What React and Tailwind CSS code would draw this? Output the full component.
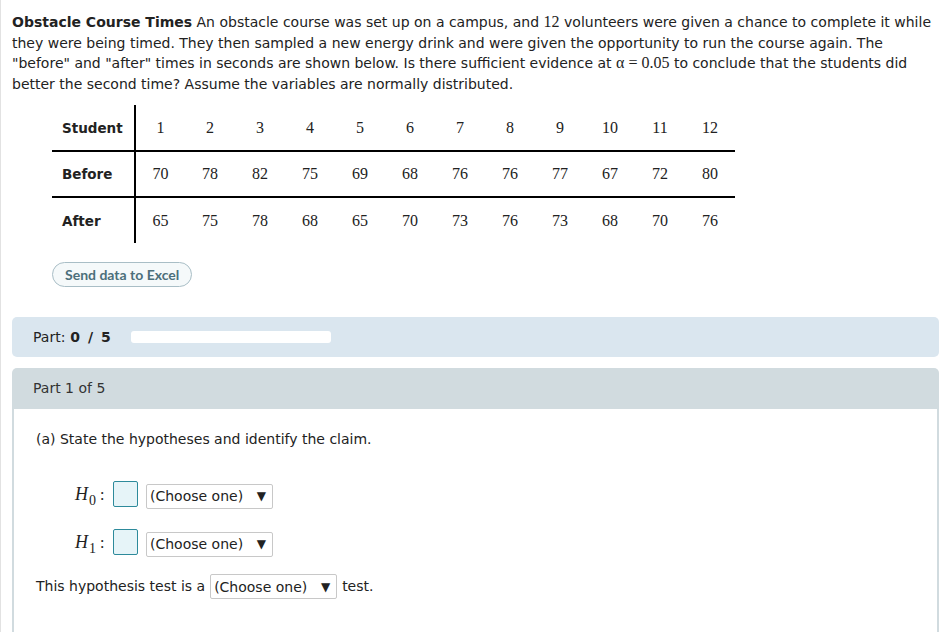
import React from "react";

const sans = { fontFamily: '"DejaVu Sans", Verdana, sans-serif' };
const serif = { fontFamily: '"Liberation Serif", "Times New Roman", serif' };

const students = [1, 2, 3, 4, 5, 6, 7, 8, 9, 10, 11, 12];
const before = [70, 78, 82, 75, 69, 68, 76, 76, 77, 67, 72, 80];
const after = [65, 75, 78, 68, 65, 70, 73, 76, 73, 68, 70, 76];

function Select() {
  return (
    <span className="inline-flex items-center justify-between w-[127px] h-[25px] px-[3px] border border-[#c8c8c8] rounded-[2px] bg-white text-[14px] text-[#222] leading-none">
      <span>(Choose one)</span>
      <span className="mr-[3px] text-[12px]">▼</span>
    </span>
  );
}

function Row({ label, values, border }) {
  return (
    <tr className={border ? "border-b-2 border-black" : ""}>
      <td className="w-[83px] h-[46px] pl-[10px] border-r-2 border-black text-[13.5px] font-bold text-[#222]" style={sans}>
        {label}
      </td>
      {values.map((v, i) => (
        <td key={i} className="w-[50px] text-center text-[16px] text-[#222]" style={serif}>
          {v}
        </td>
      ))}
    </tr>
  );
}

function Hyp({ sub }) {
  return (
    <div className="flex items-center h-[26px]">
      <span className="w-[38px] text-[#222] flex items-baseline" style={serif}>
        <span className="italic text-[18px]">H</span>
        <span className="text-[14px] relative top-[5px] ml-[1px]">{sub}</span>
        <span className="text-[16px] ml-[4px]">:</span>
      </span>
      <span className="w-[25px] h-[26px] border-[1.5px] border-[#2d8a9b] rounded-[2px] bg-[#e6f4f8]" />
      <span className="ml-[8px] mt-[4px]">
        <Select />
      </span>
    </div>
  );
}

export default function App() {
  return (
    <div className="h-[632px] w-[945px] bg-white border-l border-[#e2e2e2] overflow-hidden" style={sans}>
      <p className="pl-[11px] pr-[8px] pt-[12px] text-[14px] leading-[20.6px] text-[#222]">
        <b>Obstacle Course Times</b> An obstacle course was set up on a campus, and{" "}
        <span className="text-[16px]" style={serif}>12</span> volunteers were given a chance to complete it while they were being timed. They then sampled a new energy drink and were given the opportunity to run the course again. The "before" and "after" times in seconds are shown below. Is there sufficient evidence at{" "}
        <span className="text-[16px]" style={serif}>α = 0.05</span> to conclude that the students did better the second time? Assume the variables are normally distributed.
      </p>

      <table className="ml-[51px] mt-[11px] border-collapse">
        <tbody>
          <Row label="Student" values={students} border />
          <Row label="Before" values={before} border />
          <Row label="After" values={after} />
        </tbody>
      </table>

      <div className="ml-[51px] mt-[19px]">
        <button
          className="h-[25px] px-[12px] rounded-full border border-[#a9bec6] bg-[#f5f9fa] text-[14px] font-bold text-[#4c6f7b]"
          style={{ fontFamily: 'Lato, "Open Sans", sans-serif' }}
        >
          Send data to Excel
        </button>
      </div>

      <div className="ml-[11px] mr-[6px] mt-[30px] h-[40px] rounded-[5px] bg-[#dae6ef] flex items-center pl-[21px] text-[14px] text-[#222]">
        <span>Part:</span>
        <b className="ml-[5px] tracking-[1.5px]">0 / 5</b>
        <span className="ml-[19px] w-[200px] h-[12px] rounded-[3px] bg-white" />
      </div>

      <div className="ml-[11px] mr-[6px] mt-[11px]">
        <div className="h-[41px] rounded-t-[5px] bg-[#d1dbdf] flex items-center pl-[21px] text-[14px] text-[#333]">
          Part 1 of 5
        </div>
        <div className="h-[223px] border-x-2 border-[#d1dbdf] bg-white pl-[22px] pt-[20px] text-[14px] text-[#222]">
          <div className="leading-[20px]">(a) State the hypotheses and identify the claim.</div>
          <div className="ml-[39px] mt-[32px] flex flex-col gap-[22px]">
            <Hyp sub="0" />
            <Hyp sub="1" />
          </div>
          <div className="mt-[19px] flex items-center gap-[5px]">
            <span>This hypothesis test is a</span>
            <Select />
            <span>test.</span>
          </div>
        </div>
      </div>
    </div>
  );
}
